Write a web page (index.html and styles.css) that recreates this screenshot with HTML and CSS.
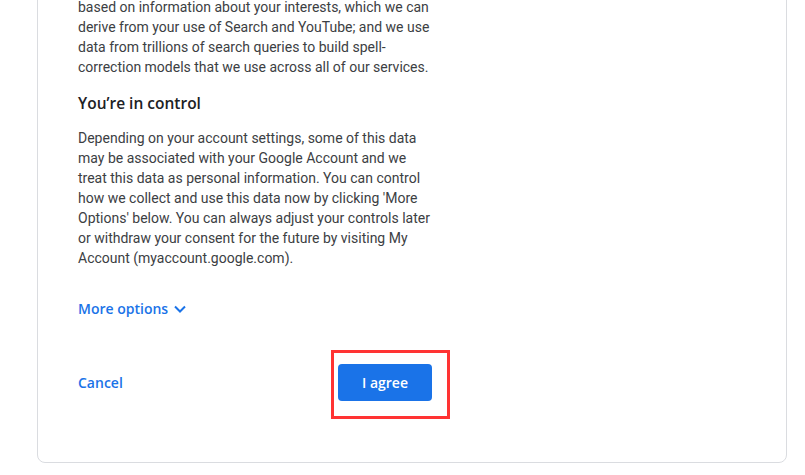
FILE: index.html
```
<!DOCTYPE html>
<html>
<head>
    <title>Before you continue</title>
    <link rel="stylesheet" href="styles.css">
</head>
<body>

<div class="card">
    <div class="content">
        <p class="text">based on information about your interests, which we can derive from your use of Search and YouTube; and we use data from trillions of search queries to build spell-correction models that we use across all of our services.</p>

        <h2 class="heading">You’re in control</h2>

        <p class="text">Depending on your account settings, some of this data may be associated with your Google Account and we treat this data as personal information. You can control how we collect and use this data now by clicking 'More Options' below. You can always adjust your controls later or withdraw your consent for the future by visiting My Account (myaccount.google.com).</p>

        <a class="more" href="#">More options
            <svg class="chevron" width="14" height="14" viewBox="0 0 14 14">
                <path d="M2 4.5 L7 9.5 L12 4.5" fill="none" stroke="#1a73e8" stroke-width="2"/>
            </svg>
        </a>

        <div class="actions">
            <a class="cancel" href="#">Cancel</a>
            <span class="highlight">
                <button class="agree">I agree</button>
            </span>
        </div>
    </div>
</div>

</body>
</html>
```

FILE: styles.css
```
body {
    margin: 0;
    background: #fff;
    font-family: Roboto, Arial, sans-serif;
    overflow: hidden;
}

.card {
    margin: -40px 18px 0 37px;
    border: 1px solid #dadce0;
    border-radius: 8px;
    padding: 36px 40px 61px 40px;
}

.content {
    width: 360px;
}

.text {
    margin: 0;
    font-size: 14px;
    line-height: 20px;
    color: #3c4043;
}

.heading {
    margin: 15px 0 14px 0;
    font-family: "Open Sans", Roboto, sans-serif;
    font-size: 15.5px;
    font-weight: 600;
    line-height: 22px;
    color: #202124;
}

.more {
    display: inline-flex;
    align-items: center;
    gap: 5px;
    margin-top: 31px;
    font-family: "Open Sans", Roboto, sans-serif;
    font-size: 14px;
    font-weight: 600;
    line-height: 20px;
    color: #1a73e8;
    text-decoration: none;
}

.chevron {
    display: block;
}

.actions {
    display: flex;
    justify-content: space-between;
    align-items: center;
    margin-top: 45px;
    padding-right: 6px;
}

.cancel {
    font-family: "Open Sans", Roboto, sans-serif;
    font-size: 14px;
    font-weight: 600;
    color: #1a73e8;
    text-decoration: none;
}

.highlight {
    position: relative;
    display: block;
}

.highlight::after {
    content: "";
    position: absolute;
    top: -14px;
    left: -7px;
    right: -18px;
    bottom: -18px;
    border: 3px solid #f33;
}

.agree {
    display: block;
    height: 37px;
    padding: 0 24px;
    border: none;
    border-radius: 4px;
    background: #1a73e8;
    color: #fff;
    font-family: "Open Sans", Roboto, sans-serif;
    font-size: 14px;
    font-weight: 600;
}
```
